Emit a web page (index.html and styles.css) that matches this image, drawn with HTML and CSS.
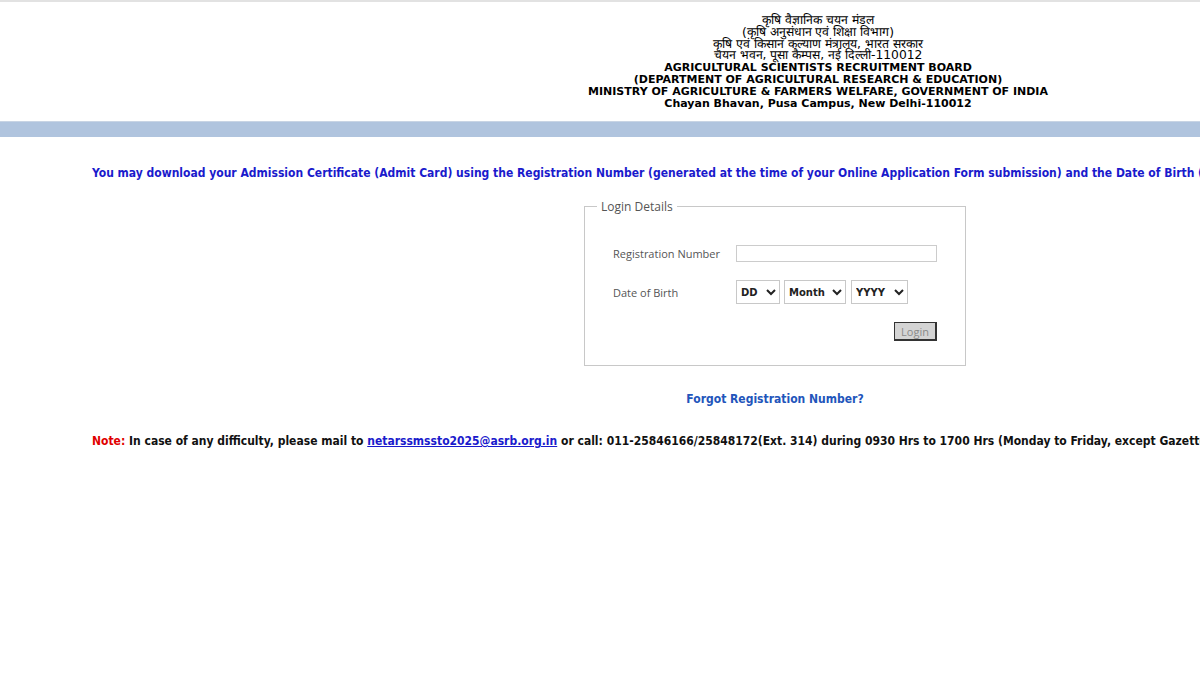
FILE: index.html
```html
<!DOCTYPE html>
<html lang="en">
<head>
  <meta charset="UTF-8">
  <title>ASRB - Admit Card</title>
  <link rel="stylesheet" href="styles.css">
</head>
<body>
  <!-- Header -->
  <div class="top-line"></div>
  <div class="header">
    <div class="header-text">
      <span class="hi">कृषि वैज्ञानिक चयन मंडल</span><br>
      <span class="hi">(कृषि अनुसंधान एवं शिक्षा विभाग)</span><br>
      <span class="hi">कृषि एवं किसान कल्याण मंत्रालय, भारत सरकार</span><br>
      <span class="hi">चयन भवन, पूसा कैम्पस, नई दिल्ली-110012</span><br>
      AGRICULTURAL SCIENTISTS RECRUITMENT BOARD<br>
      (DEPARTMENT OF AGRICULTURAL RESEARCH &amp; EDUCATION)<br>
      MINISTRY OF AGRICULTURE &amp; FARMERS WELFARE, GOVERNMENT OF INDIA<br>
      Chayan Bhavan, Pusa Campus, New Delhi-110012
    </div>
  </div>
  <div class="band"></div>

  <!-- Content -->
  <div class="content">
    <p class="intro">You may download your Admission Certificate (Admit Card) using the Registration Number (generated at the time of your Online Application Form submission) and the Date of Birth (as filled in the Online Application Form).</p>

    <div class="form-wrap">
      <fieldset class="login-box">
        <legend>Login Details</legend>
        <div class="row">
          <label>Registration Number</label>
          <input type="text" class="reg-input">
        </div>
        <div class="row">
          <label>Date of Birth</label>
          <div class="dob">
            <select class="sel-dd"><option>DD</option></select>
            <select class="sel-mm"><option>Month</option></select>
            <select class="sel-yy"><option>YYYY</option></select>
          </div>
        </div>
        <div class="btn-row">
          <button class="login-btn">Login</button>
        </div>
      </fieldset>
      <a href="#" class="forgot">Forgot Registration Number?</a>
    </div>

    <p class="note"><span class="note-label">Note:</span> In case of any difficulty, please mail to <a href="#">netarssmssto2025@asrb.org.in</a> or call: 011-25846166/25848172(Ext. 314) during 0930 Hrs to 1700 Hrs (Monday to Friday, except Gazetted Holidays).</p>
  </div>
</body>
</html>
```

FILE: styles.css
```css
/* General */
html, body {
  overflow: hidden;
}

body {
  margin: 0;
  width: 1200px;
  background: #fff;
  font-family: "DejaVu Sans", Verdana, sans-serif;
}

/* Header */
.top-line {
  height: 2px;
  background: #e2e2e2;
}

.header {
  width: 1636px;
  padding-top: 13px;
  height: 106px;
  text-align: center;
}

.header-text {
  font-size: 11px;
  font-weight: bold;
  line-height: 11.8px;
  color: #000;
}

.header-text .hi {
  font-size: 12.3px;
  font-weight: normal;
}

.band {
  height: 15px;
  background: #b0c4de;
  border-top: 1px solid #c8d4e4;
}

/* Content */
.content {
  padding-left: 92px;
}

.intro,
.note,
.forgot {
  font-family: "DejaVu Sans Condensed", "DejaVu Sans", sans-serif;
  font-stretch: condensed;
  font-size: 12px;
  font-weight: bold;
}

.intro {
  margin: 29px 0 0;
  white-space: nowrap;
  color: #1a1acc;
}

.form-wrap {
  width: 1550px;
  margin-left: -92px;
  display: flex;
  flex-direction: column;
  align-items: center;
}

.login-box {
  width: 382px;
  box-sizing: border-box;
  margin: 18px 0 0;
  padding: 30px 28px 24px 28px;
  border: 1px solid #c8c8c8;
  color: #555;
  font-family: "Open Sans", sans-serif;
}

.login-box legend {
  padding: 0 4px;
  margin-left: -16px;
  font-size: 12px;
  color: #555;
}

.row {
  display: flex;
  align-items: center;
  margin-bottom: 18px;
}

.row label {
  width: 123px;
  font-size: 11px;
}

.reg-input {
  width: 201px;
  height: 17px;
  box-sizing: border-box;
  border: 1px solid #ccc;
  padding: 0;
}

.dob {
  display: flex;
  gap: 4px;
}

.dob select {
  height: 24px;
  border: 1px solid #c8c8c8;
  background: #fff;
  font-family: "DejaVu Sans", Verdana, sans-serif;
  font-size: 10px;
  font-weight: bold;
  color: #222;
}

.sel-dd { width: 44px; }
.sel-mm { width: 62px; }
.sel-yy { width: 57px; margin-left: 1px; }

.btn-row {
  display: flex;
  justify-content: flex-end;
}

.login-btn {
  width: 43px;
  height: 19px;
  padding: 0;
  background: #d4d4d4;
  border: 1px solid #333;
  border-right-width: 2px;
  border-bottom-width: 2px;
  color: #8a8a8a;
  font-family: "Open Sans", sans-serif;
  font-size: 11px;
}

.forgot {
  margin-top: 26px;
  color: #2255bb;
  text-decoration: none;
}

.note {
  margin: 28px 0 0;
  white-space: nowrap;
  color: #111;
}

.note-label {
  color: #e00000;
}

.note a {
  color: #1a1acc;
}
```
